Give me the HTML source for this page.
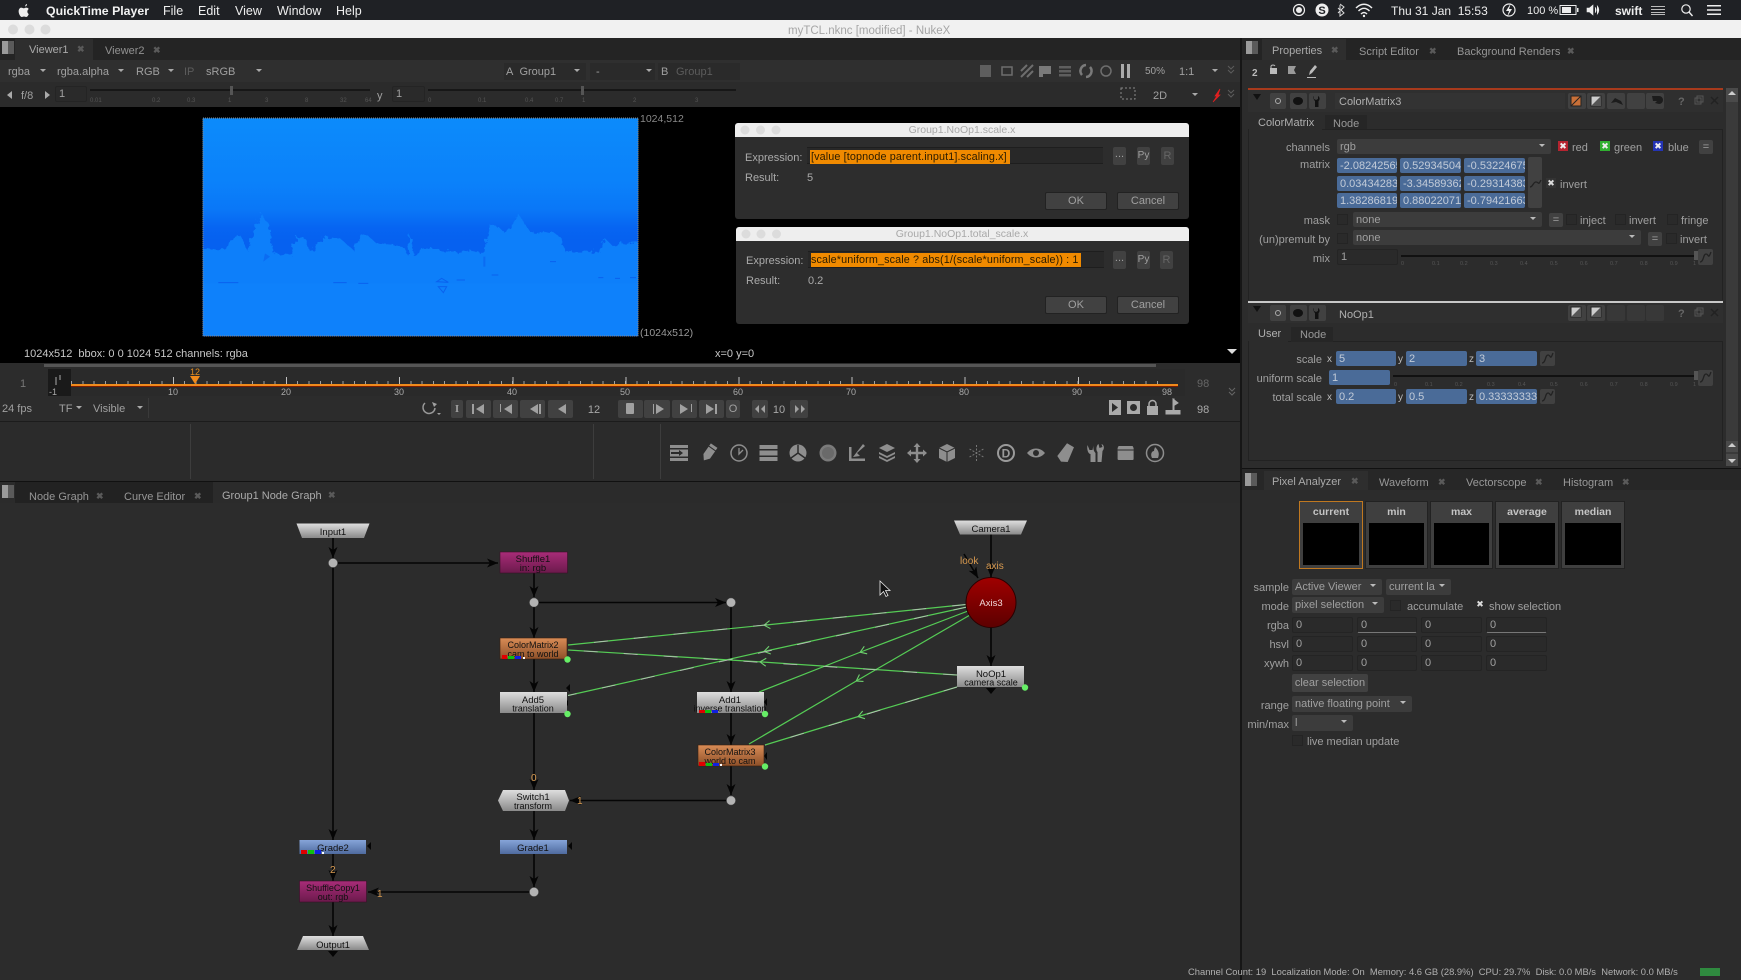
<!DOCTYPE html>
<html><head><meta charset="utf-8"><title>myTCL.nknc [modified] - NukeX</title>
<style>
html,body{margin:0;padding:0;background:#2b2b2b}
#p{position:relative;width:1741px;height:980px;overflow:hidden;background:#2c2c2c;font-family:"Liberation Sans",sans-serif;font-size:11px;color:#a0a0a0}
#p div{position:absolute;box-sizing:border-box}
.t{white-space:nowrap;line-height:14px;height:14px;margin-top:1px}
.r{transform:translateX(-100%)}
.c{transform:translateX(-50%)}
.dim{color:#5c5c5c}
.x{color:#5a5a5a;font-size:9px;font-weight:bold}
.dd{background:#3c3c3c;border-radius:2px;padding-left:3px;line-height:16px;white-space:nowrap;overflow:hidden;color:#a0a0a0}
.dd:after{content:"";position:absolute;right:6px;top:5px;border:3px solid transparent;border-top:3px solid #bbb}
.f{background:#4a6b98;color:#c2cbd8;border-radius:2px;padding-left:3px;line-height:16px;white-space:nowrap;overflow:hidden}
.g{background:#2a2a2a;border:1px solid #242424;border-radius:2px;padding-left:3px;line-height:15px;color:#a0a0a0}
.b{background:#414141;border-radius:2px;text-align:center;color:#a0a0a0;line-height:15px;white-space:nowrap}
.cb{width:11px;height:11px;background:#2a2a2a;border:1px solid #242424}
.ck{width:10px;height:10px;color:#eee;font-size:9px;line-height:10px;text-align:center}
.ic{width:12px;height:13px;background:linear-gradient(90deg,#9a9a9a 0 50%,#5a5a5a 50%)}
.pa{background:#3f3f3f;border:1px solid #222;color:#c4c4c4;text-align:center;line-height:20px;font-weight:bold;font-size:10.5px}
.pa b{position:absolute;left:3px;right:3px;top:21px;bottom:3px;background:#000;display:block}
</style></head><body><div id="p">

<!-- mac menu bar -->
<div style="left:0;top:0;width:1741px;height:20px;background:#1f2125"></div>
<div class="t" style="left:46px;top:3px;color:#f2f2f2;font-weight:bold;font-size:12.3px">QuickTime Player</div>
<div class="t" style="left:163px;top:3px;color:#eee;font-size:12.5px">File</div>
<div class="t" style="left:198px;top:3px;color:#eee;font-size:12.5px">Edit</div>
<div class="t" style="left:235px;top:3px;color:#eee;font-size:12.5px">View</div>
<div class="t" style="left:277px;top:3px;color:#eee;font-size:12.5px">Window</div>
<div class="t" style="left:336px;top:3px;color:#eee;font-size:12.5px">Help</div>
<div class="t" style="left:1391px;top:3px;color:#eee;font-size:12px">Thu 31 Jan&nbsp; 15:53</div>
<div class="t" style="left:1527px;top:3px;color:#eee;font-size:11px">100 %</div>
<div class="t" style="left:1615px;top:3px;color:#eee;font-size:12px;font-weight:bold">swift</div>

<!-- title bar -->
<div style="left:0;top:20px;width:1741px;height:18px;background:#f1f1f1"></div>
<div class="t" style="left:788px;top:23px;color:#a5a5a5;font-size:11.5px">myTCL.nknc [modified] - NukeX</div>

<!-- left panel rows -->
<div style="left:0;top:38px;width:1240px;height:22px;background:#242424"></div>
<div style="left:15px;top:39px;width:78px;height:21px;background:#2e2e2e"></div>
<div style="left:0;top:60px;width:1240px;height:22px;background:#2f2f2f"></div>
<div style="left:0;top:82px;width:1240px;height:25px;background:#2b2b2b"></div>
<div class="ic" style="left:2px;top:41px"></div>
<div class="t" style="left:29px;top:42px;color:#aaa">Viewer1</div><div class="t x" style="left:77px;top:41px">✖</div>
<div class="t" style="left:105px;top:43px;color:#929292">Viewer2</div><div class="t x" style="left:153px;top:42px">✖</div>

<div class="t" style="left:8px;top:64px">rgba</div>
<div class="t" style="left:57px;top:64px">rgba.alpha</div>
<div class="t" style="left:136px;top:64px">RGB</div>
<div class="t dim" style="left:184px;top:64px">IP</div>
<div class="t" style="left:206px;top:64px">sRGB</div>
<div style="left:504px;top:63px;width:82px;height:17px;background:#2a2a2a"></div>
<div style="left:590px;top:63px;width:65px;height:17px;background:#2a2a2a"></div>
<div style="left:658px;top:63px;width:82px;height:17px;background:#2a2a2a"></div>
<div class="t" style="left:506px;top:64px">A&nbsp; Group1</div>
<div class="t" style="left:596px;top:64px">-</div>
<div class="t" style="left:661px;top:64px">B</div><div class="t dim" style="left:676px;top:64px">Group1</div>
<div class="t" style="left:1145px;top:64px;font-size:10px">50%</div>
<div class="t" style="left:1179px;top:64px">1:1</div>

<div class="t" style="left:21px;top:88px">f/8</div>
<div class="g" style="left:55px;top:86px;width:32px;height:16px">1</div>
<div class="t" style="left:377px;top:88px">y</div>
<div class="g" style="left:392px;top:86px;width:33px;height:16px">1</div>
<div class="t" style="left:1153px;top:88px">2D</div>

<!-- viewer -->
<div style="left:0;top:107px;width:1240px;height:256px;background:#000"></div>
<svg style="position:absolute;left:190px;top:110px" width="520" height="240" viewBox="0 0 1560 720">
<defs><linearGradient id="sky" x1="0" y1="0" x2="0" y2="1"><stop offset="0" stop-color="#0c8bfb"/><stop offset=".3" stop-color="#0b81fa"/><stop offset=".42" stop-color="#0a77f7"/><stop offset=".5" stop-color="#0765f2"/><stop offset=".56" stop-color="#0661f0"/><stop offset="1" stop-color="#0661f0"/></linearGradient>
<filter id="rough" x="-2%" y="-2%" width="104%" height="104%"><feTurbulence type="fractalNoise" baseFrequency=".06" numOctaves="3" seed="4"/><feDisplacementMap in="SourceGraphic" scale="26"/></filter></defs>
<rect x="38" y="25" width="1307" height="654" fill="url(#sky)"/>
<clipPath id="imc"><rect x="39" y="26" width="1305" height="652"/></clipPath>
<g clip-path="url(#imc)">
<path d="M20 410L90 425 120 395 150 375 175 425 195 350 215 310 240 350 250 430 300 435 320 380 345 385 360 425 395 385 450 385 490 420 510 375 535 378 560 400 640 410 655 440 660 370 672 440 700 415 800 425 880 425 900 345 925 350 940 365 965 350 985 310 1010 350 1025 370 1085 365 1110 380 1125 425 1225 425 1245 385 1265 405 1360 395 1360 700 20 700Z" fill="#0e7ffa" filter="url(#rough)"/>
<path d="M39 520H1344V678H39Z" fill="#0f84fb" opacity=".5"/>
<path d="M85 518h60M430 518h40M505 520h30M740 515l15-10 20 12zM745 530l15 18 10-18zM800 510h25M905 495h20M1225 503h15M1275 505h15M1320 503h18M1080 455h18" stroke="#0a62ee" stroke-width="3" fill="none"/>
<path d="M225 430l15 10-20 15zM880 440h6v30h-6z" fill="#0b6cf2"/>
</g>
</svg>
<div class="t" style="left:640px;top:111px;font-size:10.5px;color:#888">1024,512</div>
<div class="t" style="left:640px;top:325px;font-size:10.5px;color:#999">(1024x512)</div>
<div class="t" style="left:24px;top:346px;color:#c8c8c8">1024x512&nbsp; bbox: 0 0 1024 512 channels: rgba</div>
<div class="t" style="left:715px;top:346px;color:#c8c8c8">x=0 y=0</div>

<!-- dialog 1 -->
<div style="left:735px;top:123px;width:454px;height:96px;background:#2d2d2d;border-radius:3px"></div>
<div style="left:735px;top:123px;width:454px;height:14px;background:#eeeeee;border-radius:3px 3px 0 0"></div>
<div class="t c" style="left:962px;top:122px;color:#a8a8a8;font-size:10.5px">Group1.NoOp1.scale.x</div>
<div class="t" style="left:745px;top:150px;color:#aaa">Expression:</div>
<div style="left:807px;top:147px;width:296px;height:17px;background:#282828;border-top:1px solid #1e1e1e;border-bottom:1px solid #1e1e1e"></div>
<div class="t" style="left:810px;top:149px;height:14px;width:200px;background:#f08a00;color:#2a1c00;padding-left:1px;letter-spacing:.12px;font-size:10.8px">[value [topnode parent.input1].scaling.x]</div>
<div class="b" style="left:1113px;top:147px;width:13px;height:18px">...</div>
<div class="b" style="left:1137px;top:147px;width:13px;height:18px;font-size:10px;line-height:18px">Py</div>
<div class="b" style="left:1161px;top:147px;width:13px;height:18px;color:#666;line-height:18px">R</div>
<div class="t" style="left:745px;top:170px;color:#aaa">Result:</div>
<div class="t" style="left:807px;top:170px;color:#aaa">5</div>
<div class="b" style="left:1045px;top:192px;width:62px;height:18px;line-height:17px;border:1px solid #222">OK</div>
<div class="b" style="left:1117px;top:192px;width:62px;height:18px;line-height:17px;border:1px solid #222">Cancel</div>

<!-- dialog 2 -->
<div style="left:736px;top:227px;width:453px;height:97px;background:#2d2d2d;border-radius:3px"></div>
<div style="left:736px;top:227px;width:453px;height:14px;background:#eeeeee;border-radius:3px 3px 0 0"></div>
<div class="t c" style="left:962px;top:226px;color:#a8a8a8;font-size:10.5px">Group1.NoOp1.total_scale.x</div>
<div class="t" style="left:746px;top:253px;color:#aaa">Expression:</div>
<div style="left:808px;top:251px;width:296px;height:17px;background:#282828;border-top:1px solid #1e1e1e;border-bottom:1px solid #1e1e1e"></div>
<div class="t" style="left:811px;top:252px;height:14px;width:270px;background:#f08a00;color:#2a1c00;letter-spacing:.12px;font-size:10.8px">scale*uniform_scale ? abs(1/(scale*uniform_scale)) : 1</div>
<div class="b" style="left:1113px;top:251px;width:13px;height:18px">...</div>
<div class="b" style="left:1137px;top:251px;width:13px;height:18px;font-size:10px;line-height:18px">Py</div>
<div class="b" style="left:1160px;top:251px;width:13px;height:18px;color:#666;line-height:18px">R</div>
<div class="t" style="left:746px;top:273px;color:#aaa">Result:</div>
<div class="t" style="left:808px;top:273px;color:#aaa">0.2</div>
<div class="b" style="left:1045px;top:296px;width:62px;height:18px;line-height:17px;border:1px solid #222">OK</div>
<div class="b" style="left:1117px;top:296px;width:62px;height:18px;line-height:17px;border:1px solid #222">Cancel</div>

<!-- timeline -->
<div style="left:44px;top:364px;width:1112px;height:3px;background:#555"></div>
<div style="left:48px;top:369px;width:1137px;height:27px;background:#2a2a2a"></div>
<div style="left:48px;top:369px;width:23px;height:27px;background:#1a1a1a"></div>
<div style="left:71px;top:381px;width:1097px;height:3px;background:repeating-linear-gradient(90deg,#a0a0a0 0 1px,transparent 1px 11.31px)"></div>
<div style="left:173px;top:377px;width:1000px;height:7px;background:repeating-linear-gradient(90deg,#c0c0c0 0 1px,transparent 1px 113.1px)"></div>
<div style="left:71px;top:384px;width:1107px;height:2px;background:#f08a1c"></div>
<div style="left:71px;top:386px;width:1107px;height:1px;background:#7a1c00"></div>
<div class="t c" style="left:53px;top:384px;font-size:9px;color:#aaa">-1</div>
<div class="t c" style="left:173px;top:384px;font-size:9px;color:#aaa">10</div>
<div class="t c" style="left:286px;top:384px;font-size:9px;color:#aaa">20</div>
<div class="t c" style="left:399px;top:384px;font-size:9px;color:#aaa">30</div>
<div class="t c" style="left:512px;top:384px;font-size:9px;color:#aaa">40</div>
<div class="t c" style="left:625px;top:384px;font-size:9px;color:#aaa">50</div>
<div class="t c" style="left:738px;top:384px;font-size:9px;color:#aaa">60</div>
<div class="t c" style="left:851px;top:384px;font-size:9px;color:#aaa">70</div>
<div class="t c" style="left:964px;top:384px;font-size:9px;color:#aaa">80</div>
<div class="t c" style="left:1077px;top:384px;font-size:9px;color:#aaa">90</div>
<div class="t c" style="left:1167px;top:384px;font-size:9px;color:#aaa">98</div>
<div class="t c" style="left:195px;top:364px;font-size:9px;color:#e08a20">12</div>
<div class="t" style="left:20px;top:376px;color:#777">1</div>
<div class="t" style="left:1197px;top:376px;color:#666">98</div>

<div style="left:0;top:421px;width:1240px;height:1px;background:#1c1c1c"></div>
<div class="t" style="left:2px;top:401px">24 fps</div>
<div class="t" style="left:59px;top:401px">TF</div>
<div class="t" style="left:93px;top:401px">Visible</div>
<div style="left:148px;top:398px;width:1px;height:20px;background:#3a3a3a"></div>
<div class="b" style="left:451px;top:400px;width:12px;height:18px;line-height:19px;font-family:'Liberation Serif',serif;font-weight:bold">I</div>
<div class="b" style="left:466px;top:400px;width:25px;height:18px"></div>
<div class="b" style="left:493px;top:400px;width:25px;height:18px"></div>
<div class="b" style="left:520px;top:400px;width:25px;height:18px"></div>
<div class="b" style="left:548px;top:400px;width:25px;height:18px"></div>
<div class="t c" style="left:594px;top:402px;color:#a8a8a8">12</div>
<div class="b" style="left:618px;top:400px;width:25px;height:18px"></div>
<div class="b" style="left:644px;top:400px;width:26px;height:18px"></div>
<div class="b" style="left:672px;top:400px;width:25px;height:18px"></div>
<div class="b" style="left:699px;top:400px;width:25px;height:18px"></div>
<div class="b" style="left:726px;top:400px;width:14px;height:18px;line-height:19px">O</div>
<div class="b" style="left:752px;top:400px;width:16px;height:18px"></div>
<div class="t c" style="left:779px;top:402px;color:#a8a8a8">10</div>
<div class="b" style="left:790px;top:400px;width:18px;height:18px"></div>
<div class="t" style="left:1197px;top:402px;color:#aaa">98</div>

<!-- toolbar -->
<div style="left:0;top:422px;width:1240px;height:59px;background:#2b2b2b"></div>
<div style="left:190px;top:424px;width:1px;height:55px;background:#3d3d3d"></div>
<div style="left:593px;top:424px;width:1px;height:55px;background:#3d3d3d"></div>
<div style="left:660px;top:424px;width:1px;height:55px;background:#3d3d3d"></div>
<div style="left:0;top:481px;width:1240px;height:1px;background:#111"></div>

<!-- node tabs -->
<div style="left:0;top:482px;width:1240px;height:21px;background:#2b2b2b"></div>
<div style="left:15px;top:482px;width:198px;height:21px;background:#222"></div>
<div class="ic" style="left:2px;top:485px"></div>
<div class="t" style="left:29px;top:489px;color:#969696">Node Graph</div><div class="t x" style="left:96px;top:488px">✖</div>
<div class="t" style="left:124px;top:489px;color:#969696">Curve Editor</div><div class="t x" style="left:194px;top:488px">✖</div>
<div class="t" style="left:222px;top:488px;color:#aaa">Group1 Node Graph</div><div class="t x" style="left:328px;top:487px">✖</div>

<!-- right panel -->
<div style="left:1240px;top:38px;width:2px;height:942px;background:#161616"></div>
<div style="left:1242px;top:38px;width:499px;height:22px;background:#242424"></div>
<div style="left:1262px;top:39px;width:84px;height:21px;background:#2e2e2e"></div>
<div class="ic" style="left:1246px;top:41px"></div>
<div class="t" style="left:1272px;top:43px;color:#aaa">Properties</div><div class="t x" style="left:1331px;top:42px">✖</div>
<div class="t" style="left:1359px;top:44px;color:#969696">Script Editor</div><div class="t x" style="left:1429px;top:43px">✖</div>
<div class="t" style="left:1457px;top:44px;color:#969696">Background Renders</div><div class="t x" style="left:1567px;top:43px">✖</div>
<div class="t" style="left:1252px;top:66px;color:#bbb;font-weight:bold;font-size:10px">2</div>

<div style="left:1726px;top:88px;width:12px;height:378px;background:#3a3a3a"></div>
<div style="left:1726px;top:88px;width:12px;height:14px;background:#4a4a4a"></div>
<div style="left:1726px;top:441px;width:12px;height:11px;background:#4a4a4a"></div>
<div style="left:1726px;top:454px;width:12px;height:12px;background:#4a4a4a"></div>

<!-- ColorMatrix3 panel -->
<div style="left:1248px;top:88px;width:475px;height:2px;background:#a83a1c"></div>
<div style="left:1248px;top:90px;width:475px;height:22px;background:#2f2f2f"></div>
<div class="b" style="left:1270px;top:93px;width:16px;height:16px"></div>
<div class="b" style="left:1290px;top:93px;width:17px;height:16px"></div>
<div class="b" style="left:1309px;top:93px;width:17px;height:16px"></div>
<div style="left:1335px;top:93px;width:230px;height:16px;background:#333"></div>
<div class="t" style="left:1339px;top:94px;color:#b0b0b0">ColorMatrix3</div>
<div class="b" style="left:1568px;top:93px;width:18px;height:16px"></div>
<div class="b" style="left:1587px;top:93px;width:18px;height:16px"></div>
<div class="b" style="left:1607px;top:93px;width:18px;height:16px"></div>
<div class="b" style="left:1627px;top:93px;width:18px;height:16px"></div>
<div class="b" style="left:1646px;top:93px;width:18px;height:16px"></div>
<div style="left:1248px;top:129px;width:475px;height:171px;border:1px solid #222;border-bottom:0"></div>
<div style="left:1249px;top:113px;width:73px;height:17px;background:#2c2c2c"></div>
<div style="left:1325px;top:115px;width:42px;height:14px;background:#262626"></div>
<div class="t" style="left:1258px;top:115px;color:#b0b0b0">ColorMatrix</div>
<div class="t" style="left:1333px;top:116px;color:#989898">Node</div>

<div class="t r" style="left:1330px;top:140px">channels</div>
<div class="dd" style="left:1337px;top:139px;width:214px;height:15px">rgb</div>
<div class="ck" style="left:1558px;top:141px;background:#b52430">✖</div><div class="t" style="left:1572px;top:140px">red</div>
<div class="ck" style="left:1600px;top:141px;background:#30b030">✖</div><div class="t" style="left:1614px;top:140px">green</div>
<div class="ck" style="left:1653px;top:141px;background:#2434b5">✖</div><div class="t" style="left:1668px;top:140px">blue</div>
<div class="b" style="left:1699px;top:140px;width:14px;height:14px;line-height:14px">=</div>

<div class="t r" style="left:1330px;top:157px">matrix</div>
<div class="f" style="left:1337px;top:158px;width:60px;height:15px">-2.08242565</div>
<div class="f" style="left:1400px;top:158px;width:61px;height:15px">0.52934504</div>
<div class="f" style="left:1464px;top:158px;width:61px;height:15px">-0.53224675</div>
<div class="f" style="left:1337px;top:176px;width:60px;height:15px">0.03434283</div>
<div class="f" style="left:1400px;top:176px;width:61px;height:15px">-3.34589362</div>
<div class="f" style="left:1464px;top:176px;width:61px;height:15px">-0.29314383</div>
<div class="f" style="left:1337px;top:193px;width:60px;height:15px">1.38286819</div>
<div class="f" style="left:1400px;top:193px;width:61px;height:15px">0.88022071</div>
<div class="f" style="left:1464px;top:193px;width:61px;height:15px">-0.79421663</div>
<div class="b" style="left:1528px;top:157px;width:14px;height:51px"></div>
<div class="ck" style="left:1546px;top:178px;background:#333;color:#ddd">✖</div><div class="t" style="left:1560px;top:177px">invert</div>

<div class="t r" style="left:1330px;top:213px">mask</div>
<div class="cb" style="left:1337px;top:214px"></div>
<div class="dd" style="left:1353px;top:212px;width:189px;height:15px">none</div>
<div class="b" style="left:1549px;top:213px;width:14px;height:14px;line-height:14px">=</div>
<div class="cb" style="left:1566px;top:214px"></div><div class="t" style="left:1580px;top:213px">inject</div>
<div class="cb" style="left:1615px;top:214px"></div><div class="t" style="left:1629px;top:213px">invert</div>
<div class="cb" style="left:1667px;top:214px"></div><div class="t" style="left:1681px;top:213px">fringe</div>

<div class="t r" style="left:1330px;top:232px">(un)premult by</div>
<div class="cb" style="left:1337px;top:233px"></div>
<div class="dd" style="left:1353px;top:230px;width:288px;height:15px">none</div>
<div class="b" style="left:1648px;top:232px;width:14px;height:14px;line-height:14px">=</div>
<div class="cb" style="left:1666px;top:233px"></div><div class="t" style="left:1680px;top:232px">invert</div>

<div class="t r" style="left:1330px;top:251px">mix</div>
<div class="g" style="left:1337px;top:249px;width:61px;height:16px">1</div>
<div style="left:1401px;top:255px;width:295px;height:2px;background:#111"></div>
<div style="left:1694px;top:251px;width:4px;height:9px;background:#555"></div>
<div class="b" style="left:1698px;top:249px;width:15px;height:16px"></div>

<!-- NoOp1 panel -->
<div style="left:1248px;top:301px;width:475px;height:2px;background:#c8c8c8"></div>
<div style="left:1248px;top:303px;width:475px;height:20px;background:#2f2f2f"></div>
<div class="b" style="left:1270px;top:305px;width:16px;height:16px"></div>
<div class="b" style="left:1290px;top:305px;width:17px;height:16px"></div>
<div class="b" style="left:1309px;top:305px;width:17px;height:16px"></div>
<div class="t" style="left:1339px;top:307px;color:#b0b0b0">NoOp1</div>
<div class="b" style="left:1568px;top:305px;width:18px;height:16px"></div>
<div class="b" style="left:1587px;top:305px;width:18px;height:16px"></div>
<div class="b" style="left:1607px;top:305px;width:18px;height:16px;background:#383838"></div>
<div class="b" style="left:1627px;top:305px;width:18px;height:16px;background:#383838"></div>
<div class="b" style="left:1646px;top:305px;width:18px;height:16px;background:#383838"></div>
<div style="left:1248px;top:341px;width:475px;height:120px;border:1px solid #222"></div>
<div style="left:1249px;top:325px;width:39px;height:17px;background:#2c2c2c"></div>
<div style="left:1291px;top:327px;width:42px;height:15px;background:#262626"></div>
<div class="t" style="left:1258px;top:326px;color:#b0b0b0">User</div>
<div class="t" style="left:1300px;top:327px;color:#989898">Node</div>

<div class="t r" style="left:1322px;top:352px">scale</div><div class="t" style="left:1327px;top:352px;color:#bbb;font-size:10px">x</div>
<div class="f" style="left:1336px;top:351px;width:60px;height:15px">5</div><div class="t" style="left:1398px;top:352px;color:#bbb;font-size:10px">y</div>
<div class="f" style="left:1406px;top:351px;width:61px;height:15px">2</div><div class="t" style="left:1469px;top:352px;color:#bbb;font-size:10px">z</div>
<div class="f" style="left:1476px;top:351px;width:61px;height:15px">3</div>
<div class="b" style="left:1540px;top:351px;width:15px;height:15px"></div>

<div class="t r" style="left:1322px;top:371px">uniform scale</div>
<div class="f" style="left:1329px;top:370px;width:61px;height:15px">1</div>
<div style="left:1393px;top:375px;width:303px;height:2px;background:#111"></div>
<div style="left:1694px;top:371px;width:4px;height:9px;background:#555"></div>
<div class="b" style="left:1698px;top:370px;width:15px;height:16px"></div>

<div class="t r" style="left:1322px;top:390px">total scale</div><div class="t" style="left:1327px;top:390px;color:#bbb;font-size:10px">x</div>
<div class="f" style="left:1336px;top:389px;width:60px;height:15px">0.2</div><div class="t" style="left:1398px;top:390px;color:#bbb;font-size:10px">y</div>
<div class="f" style="left:1406px;top:389px;width:61px;height:15px">0.5</div><div class="t" style="left:1469px;top:390px;color:#bbb;font-size:10px">z</div>
<div class="f" style="left:1476px;top:389px;width:61px;height:15px">0.33333333</div>
<div class="b" style="left:1540px;top:389px;width:15px;height:15px"></div>

<!-- Pixel analyzer -->
<div style="left:1242px;top:468px;width:499px;height:1px;background:#111"></div>
<div style="left:1242px;top:469px;width:499px;height:21px;background:#272727"></div>
<div style="left:1264px;top:471px;width:104px;height:19px;background:#2e2e2e"></div>
<div class="ic" style="left:1245px;top:473px"></div>
<div class="t" style="left:1272px;top:474px;color:#aaa">Pixel Analyzer</div><div class="t x" style="left:1351px;top:473px">✖</div>
<div class="t" style="left:1379px;top:475px;color:#989898">Waveform</div><div class="t x" style="left:1438px;top:474px">✖</div>
<div class="t" style="left:1466px;top:475px;color:#989898">Vectorscope</div><div class="t x" style="left:1535px;top:474px">✖</div>
<div class="t" style="left:1563px;top:475px;color:#989898">Histogram</div><div class="t x" style="left:1622px;top:474px">✖</div>

<div class="pa" style="left:1299px;top:501px;width:64px;height:68px;border-color:#c07820">current<b></b></div>
<div class="pa" style="left:1365px;top:501px;width:63px;height:68px">min<b></b></div>
<div class="pa" style="left:1430px;top:501px;width:63px;height:68px">max<b></b></div>
<div class="pa" style="left:1495px;top:501px;width:64px;height:68px">average<b></b></div>
<div class="pa" style="left:1561px;top:501px;width:64px;height:68px">median<b></b></div>

<div class="t r" style="left:1289px;top:580px">sample</div>
<div class="dd" style="left:1292px;top:579px;width:90px;height:16px">Active Viewer</div>
<div class="dd" style="left:1386px;top:579px;width:65px;height:16px">current la</div>
<div class="t r" style="left:1289px;top:599px">mode</div>
<div class="dd" style="left:1292px;top:597px;width:92px;height:16px">pixel selection</div>
<div class="cb" style="left:1390px;top:600px"></div><div class="t" style="left:1407px;top:599px">accumulate</div>
<div class="ck" style="left:1475px;top:599px;color:#ddd">✖</div><div class="t" style="left:1489px;top:599px">show selection</div>

<div class="t r" style="left:1289px;top:618px">rgba</div>
<div class="g" style="left:1292px;top:617px;width:61px;height:16px">0</div>
<div class="g" style="left:1357px;top:617px;width:60px;height:16px;border-bottom-color:#777">0</div>
<div class="g" style="left:1421px;top:617px;width:61px;height:16px">0</div>
<div class="g" style="left:1486px;top:617px;width:61px;height:16px;border-bottom-color:#777">0</div>
<div class="t r" style="left:1289px;top:637px">hsvl</div>
<div class="g" style="left:1292px;top:636px;width:61px;height:16px">0</div>
<div class="g" style="left:1357px;top:636px;width:60px;height:16px">0</div>
<div class="g" style="left:1421px;top:636px;width:61px;height:16px">0</div>
<div class="g" style="left:1486px;top:636px;width:61px;height:16px">0</div>
<div class="t r" style="left:1289px;top:656px">xywh</div>
<div class="g" style="left:1292px;top:655px;width:61px;height:16px">0</div>
<div class="g" style="left:1357px;top:655px;width:60px;height:16px">0</div>
<div class="g" style="left:1421px;top:655px;width:61px;height:16px">0</div>
<div class="g" style="left:1486px;top:655px;width:61px;height:16px">0</div>
<div class="b" style="left:1292px;top:674px;width:76px;height:18px;line-height:18px">clear selection</div>
<div class="t r" style="left:1289px;top:698px">range</div>
<div class="dd" style="left:1292px;top:696px;width:120px;height:16px">native floating point</div>
<div class="t r" style="left:1289px;top:717px">min/max</div>
<div class="dd" style="left:1292px;top:715px;width:61px;height:16px">l</div>
<div class="cb" style="left:1292px;top:735px"></div><div class="t" style="left:1307px;top:734px">live median update</div>

<!-- status -->
<div class="t" style="left:1188px;top:964px;font-size:9.4px;color:#b0b0b0">Channel Count: 19&nbsp; Localization Mode: On&nbsp; Memory: 4.6 GB (28.9%)&nbsp; CPU: 29.7%&nbsp; Disk: 0.0 MB/s&nbsp; Network: 0.0 MB/s</div>
<div style="left:1700px;top:968px;width:20px;height:8px;background:#2f8a3f"></div>

<!-- graphics overlay -->
<svg style="position:absolute;left:0;top:0" width="1741" height="980" viewBox="0 0 1741 980" font-family="Liberation Sans, sans-serif">
<defs>
<linearGradient id="gy" x1="0" y1="0" x2="0" y2="1"><stop offset="0" stop-color="#dedede"/><stop offset="1" stop-color="#8a8a8a"/></linearGradient>
<linearGradient id="or" x1="0" y1="0" x2="0" y2="1"><stop offset="0" stop-color="#d98c56"/><stop offset="1" stop-color="#8e5029"/></linearGradient>
<linearGradient id="mg" x1="0" y1="0" x2="0" y2="1"><stop offset="0" stop-color="#a82c78"/><stop offset="1" stop-color="#6c1a4c"/></linearGradient>
<linearGradient id="bl" x1="0" y1="0" x2="0" y2="1"><stop offset="0" stop-color="#86a4d8"/><stop offset="1" stop-color="#4f6b9f"/></linearGradient>
<linearGradient id="rd" x1="0" y1="0" x2="0" y2="1"><stop offset="0" stop-color="#a00000"/><stop offset="1" stop-color="#5c0000"/></linearGradient>
<marker id="a" markerWidth="11" markerHeight="10" refX="11" refY="5" orient="auto" markerUnits="userSpaceOnUse"><path d="M0 0.5L11 5L0 9.5L3 5z" fill="#050505"/></marker>
<marker id="g" markerWidth="8" markerHeight="10" refX="5" refY="5" orient="auto" markerUnits="userSpaceOnUse"><path d="M1 1L7 5L1 9" fill="none" stroke="#6fd06f" stroke-width="1.1"/></marker>
</defs>

<!-- menu icons -->
<g fill="#eee" stroke="none">
<path d="M27 4c-1 .2-2 1.300-1.800 2.400 1.100 0 2-1.200 1.800-2.400zM22 7.500c-3 0-4 3-3 6 .7 2 1.800 3.500 2.800 3.500.8 0 1.200-.5 2.200-.5s1.300.5 2.200.5c1 0 2-1.500 2.600-3-1.800-.8-2-3.800 0-5-1-1.300-2.300-1.500-3.200-1.300-.8.200-1.300.5-1.900.5-.6 0-1.400-.7-2.700-.2z"/>
<circle cx="1299" cy="10" r="5.500" fill="none" stroke="#eee" stroke-width="1.200"/><circle cx="1299" cy="10" r="3"/>
<circle cx="1322" cy="10" r="6.500"/>
<path d="M1340 4l4 3-3 3 3 3-4 3v-5l-2 2m2-8v5l-2-2" fill="none" stroke="#ddd" stroke-width="1"/>
<path d="M1356 8c5-5 11-5 16 0M1358.500 11c3.500-3.500 7.500-3.500 11 0M1361 14c2-2 4-2 6 0" fill="none" stroke="#eee" stroke-width="1.500"/><circle cx="1364" cy="16" r="1.200"/>
<circle cx="1509" cy="10" r="6" fill="none" stroke="#eee" stroke-width="1.200"/><path d="M1511 3l-5 8h3l-2 6 5-8h-3z"/>
<rect x="1560" y="5.500" width="16" height="9" fill="none" stroke="#eee"/><rect x="1562" y="7" width="9" height="6"/><rect x="1577" y="8" width="1.500" height="4"/>
<path d="M1587 8h2.500l3.500-3v10l-3.500-3h-2.500zM1595 7c1.500 2 1.500 4 0 6M1597 5.500c2.500 3 2.500 6 0 9" stroke="#eee" stroke-width=".6"/>
<path d="M1651 6h14v1h-14zM1651 9h14v1h-14zM1651 12h14v1h-14zM1651 14h14v1h-14z" fill="#bbb"/>
<circle cx="1686" cy="9" r="4.200" fill="none" stroke="#eee" stroke-width="1.200"/><path d="M1689 12l3.500 4" stroke="#eee" stroke-width="1.400"/>
<path d="M1707 5h14v1.500h-14zM1707 9.300h14v1.500h-14zM1707 13.500h14v1.500h-14z"/>
</g>
<text x="1322" y="14" font-size="11" font-weight="bold" fill="#1f2125" text-anchor="middle">S</text>
<!-- title lights -->
<g fill="#dcdcdc"><circle cx="13" cy="29.500" r="5"/><circle cx="29.500" cy="29.500" r="5"/><circle cx="45.500" cy="29.500" r="5"/>
<circle cx="745" cy="130" r="4.500"/><circle cx="760.500" cy="130" r="4.500"/><circle cx="776" cy="130" r="4.500"/>
<circle cx="746" cy="234" r="4.500"/><circle cx="761" cy="234" r="4.500"/><circle cx="776.500" cy="234" r="4.500"/></g>

<!-- viewer toolbar icons -->
<g fill="#aaa">
<path d="M40 69h6l-3 3zM118 69h6l-3 3zM168 69h6l-3 3zM256 69h6l-3 3zM574 69h6l-3 3zM646 69h6l-3 3zM1212 69h6l-3 3zM1192 93h6l-3 3z"/>
<path d="M12 91v8l-5-4zM45 91v8l5-4z"/>
<path d="M76 406h6l-3 3zM137 406h6l-3 3z"/>
</g>
<g fill="none" stroke="#5c5c5c"><path d="M1228 66l3 3 3-3M1228 70l3 3 3-3M1228 90l3 3 3-3M1228 94l3 3 3-3"/></g>
<g fill="#5e5e5e">
<rect x="980" y="65" width="11" height="12"/><rect x="1002" y="67" width="10" height="8" fill="none" stroke="#6e6e6e" stroke-width="1.500"/>
<path d="M1021 77l12-12M1021 71l6-6M1027 77l6-6" stroke="#6e6e6e" stroke-width="2"/>
<path d="M1039 66h12v8h-8v3h-4z" fill="#7a7a7a"/>
<path d="M1059 66h12v2.500h-12zM1059 70h12v2.500h-12zM1059 74h12v2.500h-12z"/>
<path d="M1086 65a6 6 0 0 0-4 10M1086 77a6 6 0 0 0 4-10" stroke="#7a7a7a" stroke-width="2.500" fill="none"/>
<circle cx="1106" cy="71" r="5" fill="none" stroke="#6e6e6e" stroke-width="1.500"/>
<rect x="1121" y="64" width="3" height="14" fill="#aaa"/><rect x="1127" y="64" width="3" height="14" fill="#aaa"/>
</g>
<rect x="1121" y="88" width="14" height="11" fill="none" stroke="#888" stroke-dasharray="2 2"/>
<path d="M1213 102l4-6-2 0 5-7-2 6 2 0z" fill="#e02020" stroke="#e02020" stroke-width=".7"/>
<!-- viewer sliders -->
<g stroke="#111" fill="none"><path d="M90 90H370M428 90H736" stroke-width="1.500"/></g>
<rect x="230" y="86" width="3" height="9" fill="#555"/><rect x="581" y="86" width="3" height="9" fill="#555"/>
<g fill="#555" font-size="6"><text x="90" y="102">0.01</text><text x="152" y="102">0.2</text><text x="187" y="102">0.3</text><text x="228" y="102">1</text><text x="265" y="102">3</text><text x="305" y="102">8</text><text x="340" y="102">32</text><text x="365" y="102">64</text><text x="428" y="102">0</text><text x="478" y="102">0.1</text><text x="525" y="102">0.4</text><text x="555" y="102">0.7</text><text x="582" y="102">1</text><text x="633" y="102">2</text><text x="695" y="102">3</text></g>
<path d="M1227 349h10l-5 5z" fill="#ddd"/>
<!-- viewer bbox -->
<rect x="203" y="118" width="435" height="218" fill="none" stroke="#888" stroke-dasharray="1 1"/>

<!-- timeline marks -->
<path d="M190 376h10l-5 8z" fill="#f08a1c"/>
<path d="M56 377v8M60 375v5" stroke="#aaa"/>
<path d="M1229 400l3 3 3-3M1229 404l3 3 3-3" stroke="#666" fill="none" transform="translate(0,-12)"/>
<g fill="#a0a0a0">
<path d="M425 403a6 6 0 1 0 10 5" fill="none" stroke="#999" stroke-width="1.500"/><path d="M432 402l5 2-3 3z"/><path d="M437 413h4l-2 2z"/>
<path d="M472 404h2v10h-2zM484 404v10l-8-5z"/>
<path d="M500 404h1v8h-1zM512 404v10l-8-5z"/>
<path d="M538 404v10l-8-5zM539 404h2v10h-2z"/>
<path d="M566 404v10l-8-5z"/>
<rect x="626" y="403" width="8" height="11" rx="1"/>
<path d="M654 404v10h-1v-10zM656 404l8 5-8 5z"/>
<path d="M680 404l8 5-8 5zM691 404h1v8h-1z"/>
<path d="M706 404l8 5-8 5zM715 404h2v10h-2z"/>
<path d="M759 405v8l-4-4zM765 405v8l-4-4zM795 405v8l4-4zM801 405v8l4-4z"/>
<path d="M1109 400h12v15h-12z" fill="#aaa"/><path d="M1112 403l6 4.500-6 4.500z" fill="#2b2b2b"/>
<rect x="1127" y="401" width="13" height="13" fill="#aaa"/><circle cx="1133.500" cy="407.500" r="3.500" fill="#2b2b2b"/>
<rect x="1147" y="406" width="11" height="9" fill="#aaa"/><path d="M1149 406v-2a3.500 3.500 0 0 1 7 0v2" fill="none" stroke="#aaa" stroke-width="1.500"/>
<path d="M1173 399l5 4-5 3zM1173 399h1v11h-1zM1166 410v4h14v-4" stroke="#aaa" fill="#aaa"/>
</g>

<!-- toolbar icons -->
<g fill="#8e8e8e" stroke="none">
<g transform="translate(679,453)"><path d="M-9-8H9v3H-9zM-9 5H9v3H-9zM-9-3.500H9v7H-9z"/><path d="M-8-1H0V-3L4 0 0 3V1h-8z" fill="#2b2b2b"/></g>
<g transform="translate(709,453) rotate(35)"><path d="M-4-9h8v3h-8zM-4-5h8v9l-4 5-4-5z"/></g>
<g transform="translate(739,453)"><circle r="8" fill="none" stroke="#8e8e8e" stroke-width="1.500"/><path d="M0-5V1L4-3" fill="none" stroke="#8e8e8e" stroke-width="1.300"/></g>
<g transform="translate(768.500,453)"><path d="M-9-8H9v4H-9zM-9-2.500H9v5H-9zM-9 4H9v4H-9z"/></g>
<g transform="translate(798,453)"><circle r="8.500"/><path d="M0-8V0M0 0L7 5M0 0L-7 5" stroke="#2b2b2b" stroke-width="1.500"/></g>
<g transform="translate(828,453)"><circle r="8.500" fill="#7a7a7a"/><circle r="6" fill="#6a6a6a"/></g>
<g transform="translate(857,453)"><path d="M-8-6v14H8v-2.500H-5.500V-6zM-4 4L6-9l2 2-8 7 3 3z"/></g>
<g transform="translate(887,453)"><path d="M0-9L8-5 0-1-8-5zM-8-1L0 3 8-1v2L0 5-8 1zM-8 3L0 7 8 3v2L0 9-8 5z"/></g>
<g transform="translate(917,453)"><path d="M-1.200-6H-3.500L0-10 3.500-6H1.200V-1.200H6V-3.500L10 0 6 3.500V1.200H1.200V6H3.500L0 10-3.500 6H-1.200V1.200H-6V3.500L-10 0-6-3.500V-1.200H-1.200z"/></g>
<g transform="translate(947,453)"><path d="M0-9L8-5V5L0 9-8 5V-5z"/><path d="M-8-5L0-1 8-5M0-1V9" stroke="#2b2b2b" fill="none"/></g>
<g transform="translate(976.500,453)" stroke="#777" fill="none"><path d="M0-8V8M-7-4L7 4M-7 4L7-4" stroke-dasharray="2 1.500"/></g>
<g transform="translate(1006,453)"><circle r="8" fill="none" stroke="#9a9a9a" stroke-width="2"/></g>
<g transform="translate(1036,453)"><path d="M-9 0C-4-6 4-6 9 0 4 6-4 6-9 0z"/><circle r="3" fill="#2b2b2b"/></g>
<g transform="translate(1066,453) rotate(30)"><path d="M-4-9H4L6 7 0 10-6 7z"/></g>
<g transform="translate(1095.500,453)"><path d="M-8-8l2 5h3l1-5c0 0-1 5 2 8v9h-5V1C-7 1-9-3-8-8zM3-9l1 4 3-1-1-3c3 1 3 5 1 7L6 9H2V-1C0-3 1-8 3-9z"/></g>
<g transform="translate(1125.600,453)"><path d="M-7-7H7l1 2v11a1 1 0 0 1-1 1H-7a1 1 0 0 1-1-1V-5z"/><path d="M-8-3H8" stroke="#2b2b2b"/></g>
<g transform="translate(1155,453)"><circle r="8.500" fill="none" stroke="#8e8e8e" stroke-width="1.500"/><path d="M0-6C3-3 5 0 3 5H-3C-5 1-3-2-1-2-1-4 0-5 0-6z"/></g>
</g>
<text x="1006" y="457.500" font-size="12" font-weight="bold" fill="#9a9a9a" text-anchor="middle">D</text>

<!-- properties icons -->
<g fill="#bbb">
<rect x="1270" y="68" width="7" height="6"/><path d="M1271 68v-2a2.500 2.500 0 0 1 4 0" fill="none" stroke="#bbb"/>
<path d="M1288 66h8l-2 4 2 4h-8z" fill="#999"/>
<path d="M1309 75l1-4 5-6 2 2-5 6zM1307 77h9v1h-9z"/>
<path d="M1253 94h8l-4 6zM1253 306h8l-4 6z" fill="#111"/>
</g>
<g fill="none" stroke="#aaa">
<circle cx="1278" cy="101" r="2.500"/><circle cx="1278" cy="313" r="2.500"/>
</g>
<g fill="#111"><ellipse cx="1298" cy="101" rx="5" ry="4"/><ellipse cx="1298" cy="313" rx="5" ry="4"/>
<path d="M1314 96v3l2 1 2-1v-3c2 1 2 4 .5 5v6h-3.500v-6c-1.500-1-2-4-1-5zM1314 308v3l2 1 2-1v-3c2 1 2 4 .5 5v6h-3.500v-6c-1.500-1-2-4-1-5z"/></g>
<rect x="1571" y="96" width="10" height="10" fill="#c87038" stroke="#222"/><path d="M1571 106l10-10" stroke="#222"/>
<rect x="1591" y="96" width="10" height="10" fill="#ccc" stroke="#222"/><path d="M1591 106l10-10v10z" fill="#555"/>
<path d="M1611 103l4-5 6 3 2 4-7-3z" fill="#1c1c1c"/>
<path d="M1652 96h7a3 3 0 0 1 0 8l-4-1 2-2-4 0z" fill="#1c1c1c"/>
<rect x="1571" y="307" width="10" height="10" fill="#ccc" stroke="#222"/><path d="M1571 317l10-10v10z" fill="#555"/>
<rect x="1591" y="307" width="10" height="10" fill="#ccc" stroke="#222"/><path d="M1591 317l10-10v10z" fill="#555"/>
<g fill="#666" font-size="11" font-weight="bold"><text x="1678" y="105">?</text><text x="1678" y="317">?</text></g>
<g stroke="#555" fill="none"><rect x="1695" y="98" width="6" height="6"/><rect x="1697" y="96" width="6" height="6"/><rect x="1695" y="310" width="6" height="6"/><rect x="1697" y="308" width="6" height="6"/></g>
<path d="M1711 97l7 7M1718 97l-7 7M1711 309l7 7M1718 309l-7 7" stroke="#222" stroke-width="1.500"/>
<path d="M1732 91l-4 4h8zM1732 443l-4 4h8zM1732 463l-4-4h8z" fill="#ccc"/>
<!-- curve icons -->
<g fill="none" stroke="#222" stroke-width="1.300">
<path d="M1530 187c3 0 3-5 6-5s2 4 5-2"/>
<path d="M1700 262c4 0 3-8 6-8s2 6 5-2"/>
<path d="M1542 363c4 0 3-8 6-8s2 6 5-2"/>
<path d="M1700 382c4 0 3-8 6-8s2 6 5-2"/>
<path d="M1542 401c4 0 3-8 6-8s2 6 5-2"/>
</g>
<g fill="#555" font-size="5.500"><text x="1401" y="265">0</text><text x="1432" y="265">0.1</text><text x="1460" y="265">0.2</text><text x="1490" y="265">0.3</text><text x="1520" y="265">0.4</text><text x="1550" y="265">0.5</text><text x="1580" y="265">0.6</text><text x="1610" y="265">0.7</text><text x="1640" y="265">0.8</text><text x="1670" y="265">0.9</text><text x="1693" y="265">1</text>
<text x="1394" y="386">0</text><text x="1425" y="386">0.1</text><text x="1455" y="386">0.2</text><text x="1487" y="386">0.3</text><text x="1518" y="386">0.4</text><text x="1550" y="386">0.5</text><text x="1580" y="386">0.6</text><text x="1610" y="386">0.7</text><text x="1640" y="386">0.8</text><text x="1670" y="386">0.9</text><text x="1693" y="386">1</text></g>

<!-- node graph wires -->
<g stroke="#050505" stroke-width="1.600" fill="none">
<path d="M333 538V558" marker-end="url(#a)"/>
<path d="M338 563H498" marker-end="url(#a)"/>
<path d="M333 567V840" marker-end="url(#a)"/>
<path d="M333 854V881" marker-end="url(#a)"/>
<path d="M333 902V936" marker-end="url(#a)"/>
<path d="M534 573V597" marker-end="url(#a)"/>
<path d="M534 606V638" marker-end="url(#a)"/>
<path d="M534 659V692" marker-end="url(#a)"/>
<path d="M534 713V790" marker-end="url(#a)"/>
<path d="M534 811V840" marker-end="url(#a)"/>
<path d="M534 854V887" marker-end="url(#a)"/>
<path d="M530 892H368" marker-end="url(#a)"/>
<path d="M539 602.500H726" marker-end="url(#a)"/>
<path d="M731 607V692" marker-end="url(#a)"/>
<path d="M731 713V745" marker-end="url(#a)"/>
<path d="M731 766V795" marker-end="url(#a)"/>
<path d="M727 800.500H570" marker-end="url(#a)"/>
<path d="M991 534V577" marker-end="url(#a)"/>
<path d="M964 554L978 578" marker-end="url(#a)"/>
<path d="M991 627V666" marker-end="url(#a)"/>
</g>
<path d="M986 688h10l-5 6zM328 951h10l-5 6z" fill="#050505"/>
<path d="M570 684l-4 4 4 4zM767 698l-3 4 3 4zM767 752l-3 4 3 4zM572 842l-4 4 4 4zM371 842l-4 4 4 4z" fill="#050505"/>
<path d="M568 700l-3 3 3 3" fill="#050505"/>

<!-- green expression lines -->
<g stroke="#55cc55" stroke-width="1.200" fill="none">
<polyline points="966,604.500 766,625 568,645" marker-mid="url(#g)"/>
<polyline points="967,607 766,651 568,695.500" marker-mid="url(#g)"/>
<polyline points="968,611 862,651.500 759,692" marker-mid="url(#g)"/>
<polyline points="970,615 858,680 749,744" marker-mid="url(#g)"/>
<polyline points="957,675 762,662 568,650" marker-mid="url(#g)"/>
<polyline points="957,687 860,716 765,745" marker-mid="url(#g)"/>
</g>
<g stroke="#bdbdbd" stroke-width=".8" stroke-dasharray="14 26" fill="none">
<path d="M966 604.500L568 645M967 607L568 695.500M957 675L568 650M957 687L765 745"/>
</g>

<!-- nodes -->
<g font-size="9.500" fill="#111" text-anchor="middle" stroke="none">
<path d="M296.500 523.500H369.500L364 538H302z" fill="url(#gy)"/><text x="333" y="535">Input1</text>
<rect x="500" y="552" width="67.500" height="21" fill="url(#mg)" stroke="#3a1028" stroke-width=".6"/><text x="533" y="562">Shuffle1</text><text x="533" y="571">in: rgb</text>
<rect x="500" y="638" width="67" height="21" fill="url(#or)" stroke="#3a2010" stroke-width=".6"/><text x="533" y="648" font-size="9">ColorMatrix2</text><text x="533" y="657" font-size="9">cam to world</text>
<rect x="500" y="692" width="67" height="21" fill="url(#gy)"/><text x="533" y="703">Add5</text><text x="533" y="711.500" font-size="9">translation</text>
<rect x="697" y="692" width="67" height="21" fill="url(#gy)"/><text x="730" y="703">Add1</text><text x="730" y="711.500" font-size="9">inverse translation</text>
<rect x="698" y="745" width="66" height="21" fill="url(#or)" stroke="#3a2010" stroke-width=".6"/><text x="730" y="755" font-size="9">ColorMatrix3</text><text x="730" y="764" font-size="9">world to cam</text>
<path d="M503 790H565L569 800.500 565 811H503L498 800.500z" fill="url(#gy)"/><text x="533" y="800">Switch1</text><text x="533" y="809" font-size="9">transform</text>
<rect x="299.500" y="840" width="66.500" height="14" fill="url(#bl)"/><text x="333" y="851">Grade2</text>
<rect x="500" y="840" width="67" height="14" fill="url(#bl)"/><text x="533" y="851">Grade1</text>
<rect x="299.500" y="881" width="67" height="21" fill="url(#mg)" stroke="#3a1028" stroke-width=".6"/><text x="333" y="891" font-size="9">ShuffleCopy1</text><text x="333" y="900" font-size="9">out: rgb</text>
<path d="M303 936H363L369 950H297z" fill="url(#gy)"/><text x="333" y="948">Output1</text>
<path d="M954 520.500H1027L1021 534.500H960z" fill="url(#gy)"/><text x="991" y="532">Camera1</text>
<circle cx="991" cy="602.500" r="25" fill="url(#rd)" stroke="#2a0000"/><text x="991" y="606" fill="#f0d8d8">Axis3</text>
<rect x="957" y="666" width="67" height="21" fill="url(#gy)"/><text x="991" y="677">NoOp1</text><text x="991" y="685.500" font-size="9">camera scale</text>
</g>
<!-- colored channel bars -->
<g>
<path d="M502 655h5v4h-5z" fill="#e00000"/><path d="M508 656h6v3h-6z" fill="#10c010"/><path d="M515 656h6v3h-6z" fill="#1020e0"/><path d="M523 657h2v2h-2z" fill="#fff"/>
<path d="M699 710h6v3h-6z" fill="#e00000"/><path d="M705 710h6v3h-6z" fill="#10c010"/><path d="M712 710h6v3h-6z" fill="#1020e0"/>
<path d="M699 762h6v4h-6z" fill="#e00000"/><path d="M706 763h6v3h-6z" fill="#10c010"/><path d="M713 763h6v3h-6z" fill="#1020e0"/><path d="M720 764h2v2h-2z" fill="#fff"/>
<path d="M301 850h6v4h-6z" fill="#e00000"/><path d="M308 850h6v4h-6z" fill="#10c010"/><path d="M315 850h6v4h-6z" fill="#1020e0"/><path d="M322 852h2v2h-2z" fill="#fff"/>
</g>
<!-- dots -->
<g fill="#b4b4b4" stroke="#666" stroke-width=".4">
<circle cx="333" cy="563" r="4.500"/><circle cx="534" cy="602.500" r="4.500"/><circle cx="731" cy="602.500" r="4.500"/><circle cx="731" cy="800.500" r="4.500"/><circle cx="534" cy="892" r="4.500"/>
</g>
<g fill="#66ee66"><circle cx="567.500" cy="659.500" r="3.200"/><circle cx="567.500" cy="714" r="3.200"/><circle cx="765" cy="714" r="3.200"/><circle cx="765" cy="766.500" r="3.200"/><circle cx="1025" cy="687.500" r="3.200"/></g>
<!-- orange labels -->
<g fill="#d89a50" font-size="10"><text x="531" y="781">0</text><text x="577" y="804">1</text><text x="330" y="873">2</text><text x="377" y="897">1</text><text x="960" y="564">look</text><text x="986" y="569">axis</text></g>
<!-- cursor -->
<path d="M880 581V595L883.500 591.500 886 596.500 888 595.500 885.500 590.500H890z" fill="#111" stroke="#eee" stroke-width=".8"/>
</svg>
</div></body></html>
